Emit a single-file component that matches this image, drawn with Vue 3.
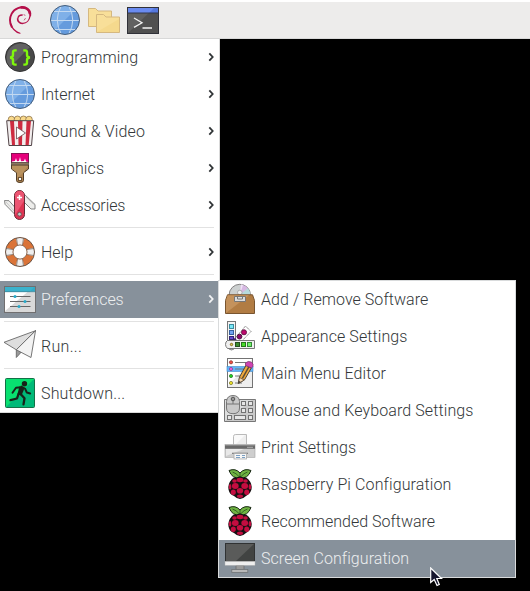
<script setup>
import { h } from 'vue'

const raspberryCells = [
  [16, 12, 3.4, 2.2], [10.5, 13, 2.3, 1.8], [21.5, 13, 2.3, 1.8],
  [11.3, 18, 3.4, 3], [20.7, 18, 3.4, 3], [6.1, 18.8, 1.3, 2.8], [25.9, 18.8, 1.3, 2.8],
  [16, 22.7, 3.2, 2.8], [9.3, 24.3, 2.5, 2.7], [22.7, 24.3, 2.5, 2.7], [16, 28.2, 3, 1.7]
]

const art = {
  swirl: `<g fill="none" stroke="#b5104a" stroke-linecap="round" stroke-linejoin="round"><path d="M23.2 11.5C23.8 8.5 22.3 5.5 19 4C14 2 7.5 4.2 4.7 9.6C2.6 13.5 2.5 18.5 4.7 22.8" stroke-width="1.9"/><path d="M14.5 3.4C18.5 3 22.3 5.4 22.8 9.3" stroke-width="2.6"/><path d="M4 20C5.2 24.8 8.4 28 13 29.3" stroke-width="1.1"/><path d="M22.9 12.5C22.3 16.5 19.4 19.3 16 19.3C12.7 19.3 10.6 17.2 10.8 14.8C11 12.5 12.8 11 15.2 11" stroke-width="1.3"/><path d="M15.2 19.8C12.2 19.5 10.2 17.8 10.3 15" stroke-width="1"/><path d="M17 10.8L18 11.2M18.3 14.5L17.3 16" stroke-width=".7"/></g>`,
  globe: `<circle cx="16" cy="16" r="14.5" fill="#659bdd"/><path d="M5.7 26.2A14.5 14.5 0 0 1 26.2 5.7Z" fill="#7fb0e8"/><g fill="none" stroke="#c3d9f1" stroke-width="1"><path d="M4 7.5H28M1.5 16.5H30.5M4 25.5H28"/><path d="M12.5 1.5Q4 16 12.5 30.5M19.5 1.5Q28 16 19.5 30.5"/></g><circle cx="16" cy="16" r="14.5" fill="none" stroke="#465f7c"/>`,
  folders: `<g stroke="#d5b880" fill="#f8df99"><path d="M.5 22.5V4.5H7.5L10 7H23.5V22.5Z"/><path d="M8.5 28.5V10.5H15.5L18 13H31.5V28.5Z"/></g><path d="M9 28L31 15V28Z" fill="#f5d98d"/>`,
  terminal: `<rect x=".5" y="3.5" width="31" height="26" fill="#505050" stroke="#303138"/><path d="M1 29L27 4H1Z" fill="#616161"/><rect x="1" y="4" width="30" height="5" fill="#5577dd"/><path d="M1 4H27L22 9H1Z" fill="#6a8bf0"/><path d="M.5 9H31.5" stroke="#30374c"/><path d="M7 14l8 4.7-8 4.7M15.5 24H25" fill="none" stroke="#f2f2f2" stroke-width="1.3"/>`,
  code: `<circle cx="16" cy="16" r="14.5" fill="#484848"/><path d="M5.8 26.2A14.5 14.5 0 0 1 26.2 5.8Z" fill="#626262"/><circle cx="16" cy="16" r="14.5" fill="none" stroke="#333"/><g fill="none" stroke="#80f70c" stroke-width="2.4"><path d="M12.7 9.4H11Q9 9.4 9 11.5V13.7Q9 16.3 6 16.5Q9 16.7 9 19.3V21.5Q9 23.6 11 23.6H12.7"/><path d="M19.3 9.4H21Q23 9.4 23 11.5V13.7Q23 16.3 26 16.5Q23 16.7 23 19.3V21.5Q23 23.6 21 23.6H19.3"/></g>`,
  popcorn: `<g fill="#f9d98b" stroke="#806540" stroke-width=".7"><circle cx="7.5" cy="4.5" r="3.3"/><circle cx="13.5" cy="4.3" r="3.3"/><circle cx="19.5" cy="4.3" r="3.3"/><circle cx="25" cy="4.5" r="3.3"/></g><path d="M2.7 5.7H29.7L27.5 30.5H5Z" fill="#f2eeee"/><g fill="#ce2b40"><path d="M6 6H10L11 30H8Z"/><path d="M14 6H18.5L18 30H14.5Z"/><path d="M22.5 6H27L24.7 30H21.5Z"/></g><path d="M2.7 5.7H29.7L27.5 30.5H5Z" fill="none" stroke="#514346"/><path d="M12.5 12L21.5 18L12.5 24Z" fill="#fff" stroke="#67484d" stroke-width=".8"/>`,
  brush: `<path d="M7.5 13H24.5V17L19.5 20.7V28.5Q19.5 30.5 16 30.5Q12.5 30.5 12.5 28.5V20.7L7.5 17Z" fill="#ae8350" stroke="#503d28"/><path d="M19 21L13 26.5V20.5L8 17V13.5H24Z" fill="#b9925e"/><rect x="7.5" y="1.5" width="17" height="9" fill="#e6007b" stroke="#871253"/><path d="M8 10.5V9.5L11 9L12 6L13 9.3L15 9L16 5L17 9.2L20 9L21 6.5L22 9.5L24 10V10.5Z" fill="#fff"/><rect x="7.5" y="10.5" width="17" height="2.5" fill="#8d765f" stroke="#514338" stroke-width=".7"/><rect x="14.5" y="25.5" width="3" height="3" fill="#fff" stroke="#6a5134"/>`,
  knife: `<g fill="#ededeb" stroke="#787878" stroke-width=".9"><path d="M.5 11.5L5 11.7L12 19.5L10.5 25L1 15.3Z"/><path d="M20.5 5.5L31 15.5V20H27L20 13Z"/></g><path d="M2 13L11 23M22 8L29.5 15.5" stroke="#bbb" stroke-width=".7"/><rect x="10.5" y="1.5" width="10" height="29" rx="5" fill="#dd3452" stroke="#672a36"/><path d="M11 26V6Q11 2 15.5 2Q20 2 20 6V12Z" fill="#ec5572"/><path d="M13 8.5H18M15.5 6V11" stroke="#fff" stroke-width="1.5"/><circle cx="15.5" cy="25.2" r="1.9" fill="#ccc" stroke="#71545a"/>`,
  lifebuoy: `<circle cx="16" cy="16" r="10.7" fill="none" stroke="#da7337" stroke-width="7.5"/><g fill="none" stroke="#eee" stroke-width="7.5"><path d="M12.5 5.5Q16 4.5 19.5 5.5M12.5 26.5Q16 27.5 19.5 26.5M5.5 12.5Q4.5 16 5.5 19.5M26.5 12.5Q27.5 16 26.5 19.5"/></g><g fill="none" stroke="#6b5344" stroke-width=".7"><path d="M12.5 2L13.5 9.5M19.5 2L18.5 9.5M12.5 30L13.5 22.5M19.5 30L18.5 22.5M2 12.5L9.5 13.5M2 19.5L9.5 18.5M30 12.5L22.5 13.5M30 19.5L22.5 18.5"/><circle cx="16" cy="16" r="14.5" stroke-width="1"/><circle cx="16" cy="16" r="7"/></g>`,
  sliders: `<rect x=".5" y="3.5" width="31" height="26" fill="#d9d9d9" stroke="#706f70"/><path d="M1 9H23.5L1 28Z" fill="#fff"/><rect x="1" y="4" width="30" height="4.5" fill="#32a9c5"/><path d="M1 4H30L26 8.5H1Z" fill="#3bb2cc"/><path d="M.5 8.7H31.5" stroke="#277b91" stroke-width=".7"/><path d="M6 13.5H26.5M6 18.5H26.5M6 23.5H26.5" stroke="#666"/><g fill="#27a9c8"><circle cx="11" cy="13.5" r="1.5"/><circle cx="21" cy="18.5" r="1.5"/><circle cx="15" cy="23.5" r="1.5"/></g>`,
  plane: `<g stroke="#686868" stroke-width=".9" stroke-linejoin="round"><path d="M12.3 19.5V27.5L16 23.5L31.5 .7Z" fill="#999"/><path d="M0 12.3L31.5 .7L12.3 19.8Z" fill="#dedede"/><path d="M31.5 .7L12.3 19.8L27 27.5Z" fill="#f3f3f3"/></g>`,
  exit: `<rect x="1.5" y="1.5" width="29" height="29" rx="1" fill="#00b978" stroke="#147047"/><path d="M2 30V2H30Z" fill="#08e170"/><circle cx="20.5" cy="6.8" r="2.7" fill="#172319"/><path d="M17.3 9.6L21 11.5L22.8 15.5L26.2 16.5M17 10.3L12 10.7L8.5 15.8" fill="none" stroke="#172319" stroke-width="1.9" stroke-linecap="round" stroke-linejoin="round"/><path d="M15.4 9.3L20.5 11.3L17.5 18.5L13.4 17.5Z" fill="#172319"/><path d="M14.5 17L13 21.5L6.5 23.2M17 17.5L20.5 21.3L19.5 27.4" fill="none" stroke="#172319" stroke-width="2.3" stroke-linecap="round" stroke-linejoin="round"/>`,
  install: `<circle cx="15.8" cy="12" r="10.7" fill="#ccd0d0" stroke="#797777" stroke-width=".9"/><path d="M15.8 12L17 1.4Q21.3 2 24 5.2Z" fill="#d7b8e3"/><path d="M15.8 12L24 5.2Q26 8 26.5 11.5Z" fill="#b6dadd"/><path d="M15.8 12L17 1.4L19 2Z" fill="#efe3f6"/><circle cx="15.8" cy="9.5" r="2.3" fill="#eee" stroke="#999" stroke-width=".7"/><path d="M3.5 11.8H28.5L30.5 17.5V30.5H1.5V17.5Z" fill="#b17c43" stroke="#795530"/><path d="M2 30L25 12.3H3.7L2 17.5Z" fill="#c4925c"/><path d="M10.5 13.5H21.5V18.5H10.5Z" fill="#dcdcdc" stroke="#777"/><path d="M13.5 14V16H18.5V14" fill="none" stroke="#777"/>`,
  palette: `<path d="M8 22L21.5 6L27 11.5L15 24Z" fill="#fff" stroke="#777" stroke-dasharray="1.3 .7"/><rect x="3.5" y="1.5" width="8" height="22" fill="#f4f4f4" stroke="#777"/><g stroke-width="1"><rect x="5.5" y="4.5" width="4" height="4" fill="#78e7f5" stroke="#398ca0"/><rect x="5.5" y="10.5" width="4" height="4" fill="#70a3f1" stroke="#345fa0"/><rect x="5.5" y="16.5" width="4" height="3" fill="#654ad0" stroke="#342472"/></g><circle cx="20" cy="12.3" r="2.5" fill="#bf086d" stroke="#6b174d"/><circle cx="15.5" cy="16.6" r="2.4" fill="#8c086a" stroke="#501440"/><path d="M9 20L11 17.5L13 20.5" fill="#45206e"/><path d="M3.5 20.5H30.5V28.5H3.5L2 26.5L1.5 24.5L2 22Z" fill="#f0f0f0" stroke="#777"/><path d="M5 29L7.5 30L10 29" fill="#aaa" stroke="#888"/><circle cx="7.5" cy="24.5" r="1.2" fill="#e4c84e" stroke="#806d22"/><g><rect x="11.5" y="22.5" width="4" height="4" fill="#3a8d2b" stroke="#274d20"/><rect x="17.5" y="22.5" width="4" height="4" fill="#46db29" stroke="#27731b"/><rect x="23.5" y="22.5" width="4" height="4" fill="#71ef69" stroke="#338a35"/></g>`,
  editor: `<rect x="3.5" y="1.5" width="25" height="29" fill="#eee" stroke="#737373"/><path d="M4 2H28L4 29Z" fill="#fff"/><rect x="3" y="9.5" width="26" height="5" fill="#61b5fa" stroke="#4489c8" stroke-width=".6"/><path d="M11 5.5H22M11 12H22M11 19H17M11 26H18" stroke="#777"/><g stroke-width=".8"><circle cx="7" cy="5.3" r="1.6" fill="#f34c45" stroke="#8e3734"/><circle cx="7" cy="12" r="1.6" fill="#ec62dc" stroke="#8a4194"/><circle cx="7" cy="19" r="1.6" fill="#20d51e" stroke="#297c29"/><circle cx="7" cy="26" r="1.6" fill="#f2e728" stroke="#827c2c"/></g><path d="M14.3 26.5L15.5 20L22.2 8L27.3 11L20.5 22.8Z" fill="#efaa3d" stroke="#504434"/><path d="M18.4 21.3L25 9.7" stroke="#5b4c37" stroke-width="1.5"/><path d="M14.3 26.5L15.5 20.5L20.2 23Z" fill="#f4d6ac" stroke="#504434" stroke-width=".7"/><path d="M14.3 26.5L14.7 23.8L16.6 25Z" fill="#333"/><path d="M21.5 8.5V6Q24 3.3 27.5 5.2Q30 7 28.8 9.5L27.5 11Z" fill="#cf43b2" stroke="#7f386e" stroke-width=".8"/>`,
  input: `<path d="M.5 5.5H31.5V27.5H.5Z" fill="#cacaca" stroke="#777"/><path d="M1 27L28 6H1Z" fill="#dddede"/><g fill="#e6e6e6" stroke="#737373"><rect x="17.5" y="7.5" width="4" height="4"/><rect x="24.5" y="7.5" width="4" height="4"/><rect x="17.5" y="14.5" width="4" height="4"/><rect x="24.5" y="14.5" width="4" height="4"/><rect x="3.5" y="21.5" width="4" height="4"/><rect x="10.5" y="21.5" width="11" height="4"/><rect x="24.5" y="21.5" width="4" height="4"/></g><path d="M2.5 10V7.5Q3 1.5 9 1.5Q15 1.5 15.5 7.5V14Q15.5 19.7 9 19.7Q2.5 19.7 2.5 14Z" fill="#c9c9c9" stroke="#777"/><path d="M3 10H15M9 7V10" stroke="#777"/><circle cx="9" cy="5" r="1.8" fill="#969696" stroke="#555"/>`,
  printer: `<path d="M9.5 15V5.5Q9.5 3.5 11.5 3.5H22.5V15Z" fill="#eee" stroke="#bababa"/><path d="M10 15V6Q10 4 13 4H21Z" fill="#fafafa"/><rect x="1" y="13.3" width="30" height="13" fill="#cecece" stroke="#a1a1a1" stroke-width=".6"/><rect x="1" y="14.3" width="30" height="3.5" fill="#696969"/><path d="M2 25L20 18H2Z" fill="#e8e8e8"/><path d="M23.5 16.3H29" stroke="#f3f3f3" stroke-dasharray="1 1"/><rect x="8" y="21.7" width="16" height="1.3" fill="#818181"/><rect x="10" y="22.5" width="12.5" height="5.5" fill="#f6f6f6" stroke="#aaa" stroke-width=".8"/><path d="M12 24.5H16M12 26.5H16M18 24.5H21M18 26.5H21" stroke="#7b9fc2"/>`,
  raspberry: `<path d="M15.8 9.5Q8.5 11.5 5 2.5Q11.5 -.1 16 5Q20.5 -.1 27 2.5Q23.5 11.5 16.2 9.5Z" fill="#6fb342" stroke="#192815"/><path d="M8.5 4Q12 5 15.5 9M23.5 4Q20 5 16.5 9M16 5V9" fill="none" stroke="#284e1e" stroke-width=".8"/><path d="M8 11Q10 8.8 13 9.4L16 8.3L19 9.4Q22 8.8 24.5 11.5Q28.5 16 27.5 21.5Q26 26 22 28Q19 31 16 31Q13 31 10 28Q5.5 26.5 4.5 21.5Q3.5 16 8 11Z" fill="#171012"/>` + raspberryCells.map(([x, y, a, b]) => `<ellipse cx="${x}" cy="${y}" rx="${a}" ry="${b}" fill="#c40d40"/>`).join(''),
  monitor: `<rect x="1.5" y="1.5" width="29" height="18" fill="#414342" stroke="#303233"/><path d="M2 2H30L12 19H2Z" fill="#5a5b5a"/><path d="M12 23.5H20V28H12Z" fill="#999" stroke="#666" stroke-width=".7"/><rect x="1" y="19.3" width="30" height="4" fill="#eee" stroke="#b5b5b5" stroke-width=".4"/><rect x="7.8" y="27.5" width="16" height="3" fill="#b8b8b8" stroke="#6f7375" stroke-width=".8"/>`
}

const Icon = ({ name }) =>
  h('svg', { width: 32, height: 32, viewBox: '0 0 32 32', 'aria-hidden': true, innerHTML: art[name] })
Icon.props = ['name']

const launchers = ['globe', 'folders', 'terminal']

const groups = [
  [
    { label: 'Programming', icon: 'code', tracking: 0.09, more: true },
    { label: 'Internet', icon: 'globe', tracking: 0, more: true },
    { label: 'Sound & Video', icon: 'popcorn', tracking: 0.14, more: true },
    { label: 'Graphics', icon: 'brush', tracking: 0.12, more: true },
    { label: 'Accessories', icon: 'knife', tracking: -0.09, more: true }
  ],
  [{ label: 'Help', icon: 'lifebuoy', tracking: 0, more: true }],
  [{ label: 'Preferences', icon: 'sliders', tracking: -0.1, more: true, active: true }],
  [{ label: 'Run...', icon: 'plane', tracking: 0.3 }],
  [{ label: 'Shutdown...', icon: 'exit', tracking: 0.17 }]
]

const preferences = [
  { label: 'Add / Remove Software', icon: 'install', tracking: 0.05 },
  { label: 'Appearance Settings', icon: 'palette', tracking: 0.08 },
  { label: 'Main Menu Editor', icon: 'editor', tracking: 0.12 },
  { label: 'Mouse and Keyboard Settings', icon: 'input', tracking: 0.11 },
  { label: 'Print Settings', icon: 'printer', tracking: 0.08 },
  { label: 'Raspberry Pi Configuration', icon: 'raspberry', tracking: 0.11 },
  { label: 'Recommended Software', icon: 'raspberry', tracking: 0 },
  { label: 'Screen Configuration', icon: 'monitor', tracking: 0.05, active: true }
]
</script>

<template>
  <main class="desktop">
    <header class="taskbar">
      <Icon class="start" name="swirl" />
      <Icon v-for="name in launchers" :key="name" :name="name" />
    </header>

    <nav class="menu">
      <ul v-for="(group, i) in groups" :key="i" class="group">
        <li v-for="item in group" :key="item.label" class="row" :class="{ active: item.active }">
          <Icon :name="item.icon" />
          <span class="label" :style="{ letterSpacing: item.tracking + 'px' }">{{ item.label }}</span>
          <svg v-if="item.more" class="chevron" width="6" height="10" viewBox="0 0 6 10">
            <path d="M1.3 1.3L4.7 5L1.3 8.7" />
          </svg>
        </li>
      </ul>
    </nav>

    <ul class="submenu">
      <li v-for="item in preferences" :key="item.label" class="row" :class="{ active: item.active }">
        <Icon :name="item.icon" />
        <span class="label" :style="{ letterSpacing: item.tracking + 'px' }">{{ item.label }}</span>
      </li>
    </ul>

    <svg class="pointer" width="14" height="21" viewBox="0 0 14 21">
      <path d="M.7 1V15.5L4.2 12.5L7 18.5L9.3 17.5L6.8 11.5H11.5Z" />
    </svg>
  </main>
</template>

<style>
body {
  margin: 0;
  background: #000;
}
</style>

<style scoped>
.desktop {
  position: relative;
  width: 530px;
  height: 591px;
  overflow: hidden;
  background: #000;
  color: #333739;
  font: 300 16px/37px Roboto, sans-serif;
}

svg {
  display: block;
  flex: none;
}

.taskbar {
  display: flex;
  gap: 7px;
  box-sizing: border-box;
  height: 39px;
  padding: 2px 0 0 7px;
  border-top: 2px solid #fff;
  border-bottom: 1px solid #d8d8d8;
  background: #edeceb;
}

.start {
  margin-right: 3px;
}

ul {
  margin: 0;
  padding: 0;
  list-style: none;
}

.menu {
  box-sizing: border-box;
  width: 220px;
  border-right: 1px solid #d9d9d9;
  border-bottom: 1px solid #d9d9d9;
  background: #fff;
}

.group + .group::before {
  content: '';
  display: block;
  height: 1px;
  margin: 3px 5px 6px 4px;
  background: #e2e2e2;
}

.row {
  display: flex;
  align-items: center;
  box-sizing: border-box;
  height: 37px;
  padding: 0 5px 1px 4px;
}

.row.active {
  background: #87919b;
  color: #eceeef;
}

.label {
  flex: 1;
  margin-left: 5px;
  white-space: nowrap;
}

.chevron {
  fill: none;
  stroke: #303436;
  stroke-width: 1.8;
}

.active .chevron {
  stroke: #f1f2f3;
}

.submenu {
  position: absolute;
  top: 280px;
  left: 218px;
  box-sizing: border-box;
  width: 298px;
  border: 1px solid #d9dbdc;
  background: #fff;
}

.submenu .row {
  padding-left: 5px;
}

.pointer {
  position: absolute;
  top: 567px;
  left: 430px;
  fill: #15152e;
  stroke: #fff;
  stroke-width: 1.2;
}
</style>
